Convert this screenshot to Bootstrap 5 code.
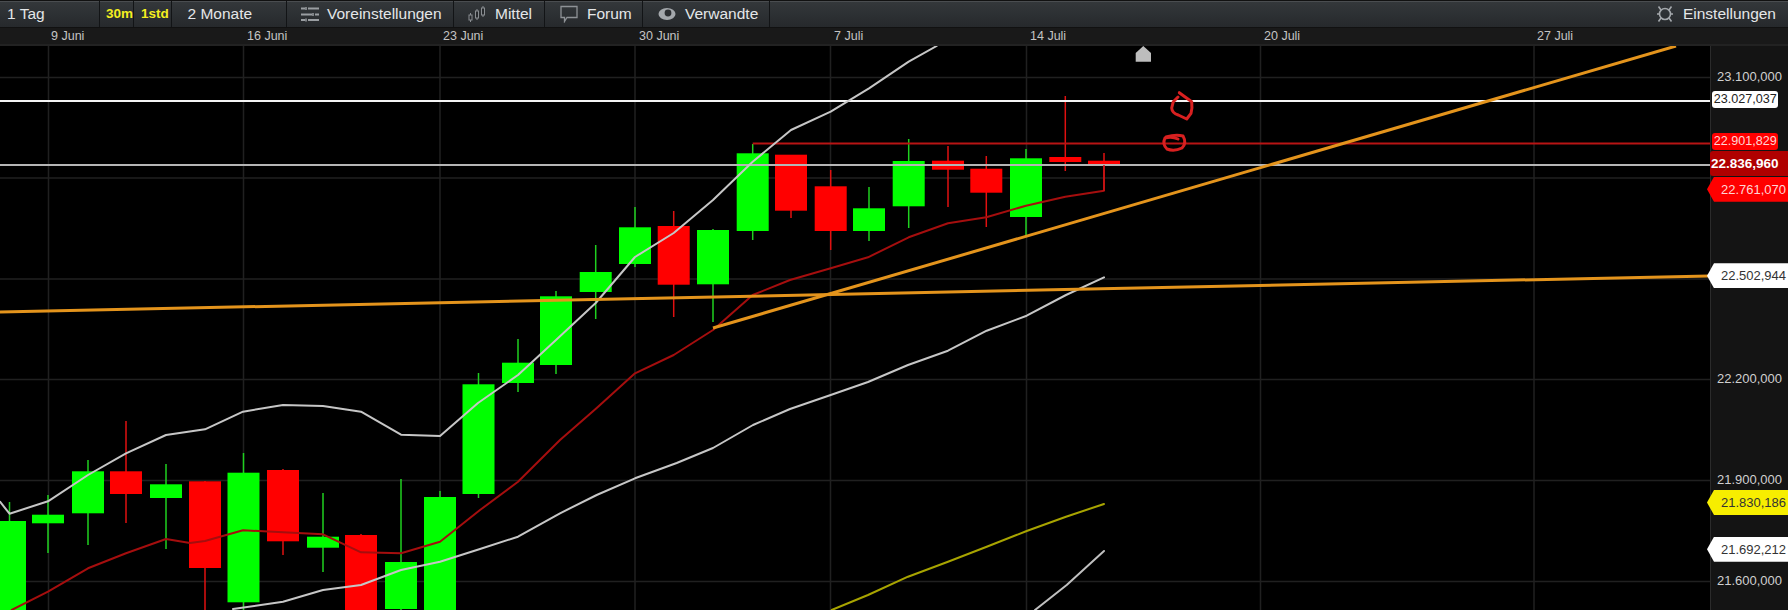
<!DOCTYPE html>
<html lang="de">
<head>
<meta charset="utf-8">
<title>Chart</title>
<link href="https://cdn.jsdelivr.net/npm/bootstrap@5.3.0/dist/css/bootstrap.min.css" rel="stylesheet">
<style>
html,body{height:100%;margin:0;background:#000;overflow:hidden;}
body{font-family:"Liberation Sans",Arial,sans-serif;}
.chart-app{width:1788px;height:610px;}
.tool-bar{height:28px;background:linear-gradient(#34383b,#26292c);border-top:1px solid #111;border-bottom:1px solid #111;box-shadow:inset 0 1px #4a4d50;color:#e4e6e8;font-size:15.5px;line-height:1;}
.tool-item{height:100%;padding-left:7px;border-right:1px solid #121416;white-space:nowrap;}
.w-tag{width:100px;}.w-m{width:34px;padding-left:6px;}.w-h{width:37.5px;padding-left:7px;}.w-mon{width:115.5px;padding-left:16px;}
.w-vor{width:167px;padding-left:14px;}.w-mit{width:91px;padding-left:14px;}.w-for{width:98px;padding-left:15px;}.w-ver{width:127px;padding-left:15px;}
.w-vor .tool-ico{margin-right:8px;}
.tool-gold{color:#f4ee20;font-weight:700;font-size:13.5px;}
.tool-ico{margin-right:9px;flex:none;}
.tool-set{padding-right:12px;}
.date-bar{height:18px;background:#191919;border-bottom:2px solid #222;color:#c4c4c4;font-size:12.5px;}
.date-tag{position:absolute;top:1px;line-height:15px;}
.plot-area{height:564px;}
.plot-svg{display:block;width:1710px;height:564px;flex:none;background:#000;}
.scale-col{width:78px;background:#141414;border-left:1px solid #2b2b2b;font-size:13px;color:#d0d0d0;}
.scale-val{position:absolute;left:6px;line-height:15px;}
.tag-box{position:absolute;left:1.3px;width:66px;text-align:center;border-radius:3px;line-height:16px;height:17px;font-size:12.6px;white-space:nowrap;}
.tag-white{background:#fff;color:#222;}
.tag-red{background:#f00;color:#ffd5d5;}
.tag-cur{position:absolute;left:-1px;width:78px;height:25px;line-height:25px;background:#b00000;color:#fff;font-weight:700;padding-left:1px;font-size:13.5px;border-radius:3px 0 0 3px;white-space:nowrap;}
.tag-arrow{position:absolute;left:-4px;width:81px;height:25px;line-height:25px;font-size:13px;padding-left:14px;clip-path:polygon(0 50%,7px 0,100% 0,100% 100%,7px 100%);white-space:nowrap;}
.arr-red{background:#f00;color:#ffd5d5;}
.arr-white{background:#fff;color:#333;}
.arr-yellow{background:#f7ee00;color:#333;}
.g-line{stroke:#202020;stroke-width:1.5;}
.s-line{fill:none;stroke-linejoin:round;stroke-linecap:round;}
.up rect{fill:#00ff00;}
.up line{stroke:#1fd01f;stroke-width:1.5;}
.dn rect{fill:#ff0000;}
.dn line{stroke:#e01010;stroke-width:1.5;}
</style>
</head>
<body>
<div class="chart-app d-flex flex-column">
  <div class="tool-bar d-flex align-items-center">
    <div class="tool-item w-tag d-flex align-items-center">1 Tag</div>
    <div class="tool-item w-m tool-gold d-flex align-items-center">30m</div>
    <div class="tool-item w-h tool-gold d-flex align-items-center">1std</div>
    <div class="tool-item w-mon d-flex align-items-center">2 Monate</div>
    <div class="tool-item w-vor d-flex align-items-center">
      <svg class="tool-ico" width="18" height="16" viewBox="0 0 18 16" stroke="#9a9ea2" stroke-width="2" fill="none"><path d="M0 2.500H4M7 2.500H18M0 8.500H11M14 8.500H18M0 14H4M7 14H18"/><path d="M5 1V4M12 7V10M5 12.500V15.500" stroke-width="1.500"/></svg>
      Voreinstellungen</div>
    <div class="tool-item w-mit d-flex align-items-center">
      <svg class="tool-ico" width="18" height="18" viewBox="0 0 18 18" stroke="#8a8e92" stroke-width="1" fill="none"><path d="M2.500 8V17M9 4V15M15 1V12"/><rect x="1" y="10" width="3" height="5" fill="#26292c"/><rect x="7.500" y="6" width="3" height="7" fill="#26292c"/><rect x="13.500" y="3" width="3" height="7" fill="#26292c"/></svg>
      Mittel</div>
    <div class="tool-item w-for d-flex align-items-center">
      <svg class="tool-ico" width="18" height="18" viewBox="0 0 18 18" stroke="#8e9296" stroke-width="1.300" fill="none"><path d="M1 1.500H17V12.500H7L4.500 16.500V12.500H1Z"/></svg>
      Forum</div>
    <div class="tool-item w-ver d-flex align-items-center">
      <svg class="tool-ico" width="18" height="14" viewBox="0 0 18 14"><ellipse cx="9" cy="7" rx="8.500" ry="6" fill="#a4a8ac"/><circle cx="10" cy="6" r="3.400" fill="#2c2f32"/></svg>
      Verwandte</div>
    <div class="tool-set ms-auto d-flex align-items-center">
      <svg class="tool-ico" width="18" height="18" viewBox="0 0 18 18" stroke="#a4a8ac" stroke-width="1.600" fill="none"><circle cx="9" cy="9" r="5.500"/><path d="M2.500 1.500L5 5M15.500 1.500L13 5M2.500 16.500L5 13M15.500 16.500L13 13M1 9H3.500M14.500 9H17"/></svg>
      Einstellungen</div>
  </div>
  <div class="date-bar position-relative">
    <span class="date-tag" style="left:51px">9 Juni</span>
    <span class="date-tag" style="left:247px">16 Juni</span>
    <span class="date-tag" style="left:443px">23 Juni</span>
    <span class="date-tag" style="left:639px">30 Juni</span>
    <span class="date-tag" style="left:834px">7 Juli</span>
    <span class="date-tag" style="left:1030px">14 Juli</span>
    <span class="date-tag" style="left:1264px">20 Juli</span>
    <span class="date-tag" style="left:1537px">27 Juli</span>
  </div>
  <div class="plot-area d-flex">
    <svg class="plot-svg" viewBox="0 46 1710 564" xmlns="http://www.w3.org/2000/svg">
      <g class="g-line">
        <line x1="0" x2="1710" y1="77.500" y2="77.500"/><line x1="0" x2="1710" y1="178" y2="178"/><line x1="0" x2="1710" y1="279" y2="279"/><line x1="0" x2="1710" y1="379.500" y2="379.500"/><line x1="0" x2="1710" y1="480.500" y2="480.500"/><line x1="0" x2="1710" y1="581.500" y2="581.500"/>
        <line y1="46" y2="610" x1="48.500" x2="48.500"/><line y1="46" y2="610" x1="243.500" x2="243.500"/><line y1="46" y2="610" x1="440" x2="440"/><line y1="46" y2="610" x1="635" x2="635"/><line y1="46" y2="610" x1="830.500" x2="830.500"/><line y1="46" y2="610" x1="1026.500" x2="1026.500"/><line y1="46" y2="610" x1="1260.500" x2="1260.500"/><line y1="46" y2="610" x1="1534" x2="1534"/>
      </g>
      <g class="up"><line x1="9.500" x2="9.500" y1="502" y2="610"/><rect x="-6" y="521" width="32" height="89"/></g>
      <g class="up"><line x1="48" x2="48" y1="495" y2="553"/><rect x="32" y="514.700" width="32" height="8.600"/></g>
      <g class="up"><line x1="88" x2="88" y1="460" y2="545"/><rect x="72" y="471.300" width="32" height="42"/></g>
      <g class="dn"><line x1="126" x2="126" y1="421" y2="523"/><rect x="110" y="471.300" width="32" height="22.700"/></g>
      <g class="up"><line x1="166" x2="166" y1="464" y2="549"/><rect x="150" y="484.300" width="32" height="13.700"/></g>
      <g class="dn"><line x1="205" x2="205" y1="481" y2="610"/><rect x="189" y="481.300" width="32" height="86.700"/></g>
      <g class="up"><line x1="243.500" x2="243.500" y1="453" y2="610"/><rect x="227.500" y="472.700" width="32" height="129.600"/></g>
      <g class="dn"><line x1="283" x2="283" y1="469" y2="555"/><rect x="267" y="470" width="32" height="71.300"/></g>
      <g class="up"><line x1="323" x2="323" y1="493" y2="572"/><rect x="307" y="536.700" width="32" height="11"/></g>
      <g class="dn"><line x1="361" x2="361" y1="534" y2="610"/><rect x="345" y="535" width="32" height="75"/></g>
      <g class="up"><line x1="401" x2="401" y1="479" y2="610"/><rect x="385" y="562" width="32" height="47"/></g>
      <g class="up"><line x1="440" x2="440" y1="491" y2="610"/><rect x="424" y="497" width="32" height="113"/></g>
      <g class="up"><line x1="478.500" x2="478.500" y1="373" y2="498"/><rect x="462.500" y="384.300" width="32" height="109.700"/></g>
      <g class="up"><line x1="518" x2="518" y1="339" y2="392"/><rect x="502" y="362.700" width="32" height="20.300"/></g>
      <g class="up"><line x1="556" x2="556" y1="291" y2="374"/><rect x="540" y="296.300" width="32" height="68.700"/></g>
      <g class="up"><line x1="595.700" x2="595.700" y1="245" y2="319"/><rect x="579.700" y="272" width="32" height="20"/></g>
      <g class="up"><line x1="635" x2="635" y1="207" y2="267"/><rect x="619" y="227.300" width="32" height="36.700"/></g>
      <g class="dn"><line x1="673.700" x2="673.700" y1="211" y2="317"/><rect x="657.700" y="226" width="32" height="58.700"/></g>
      <g class="up"><line x1="713" x2="713" y1="229" y2="322"/><rect x="697" y="230" width="32" height="54.300"/></g>
      <g class="up"><line x1="752.700" x2="752.700" y1="144" y2="240"/><rect x="736.700" y="153.300" width="32" height="77.700"/></g>
      <g class="dn"><line x1="791" x2="791" y1="155" y2="218"/><rect x="775" y="154.700" width="32" height="56"/></g>
      <g class="dn"><line x1="830.700" x2="830.700" y1="170" y2="250"/><rect x="814.700" y="186.300" width="32" height="44.700"/></g>
      <g class="up"><line x1="869" x2="869" y1="187" y2="241"/><rect x="853" y="208.300" width="32" height="22.700"/></g>
      <g class="up"><line x1="908.700" x2="908.700" y1="139" y2="228"/><rect x="892.700" y="161" width="32" height="45.300"/></g>
      <g class="dn"><line x1="948" x2="948" y1="146" y2="207"/><rect x="932" y="160.700" width="32" height="9"/></g>
      <g class="dn"><line x1="986.300" x2="986.300" y1="156" y2="227"/><rect x="970.300" y="168.700" width="32" height="24"/></g>
      <g class="up"><line x1="1026" x2="1026" y1="149" y2="237"/><rect x="1010" y="158.300" width="32" height="58.700"/></g>
      <g class="dn"><line x1="1065.300" x2="1065.300" y1="96" y2="171"/><rect x="1049.300" y="157" width="32" height="5"/></g>
      <g class="dn"><line x1="1104" x2="1104" y1="153" y2="191"/><rect x="1088" y="160.700" width="32" height="3.600"/></g>

      <line x1="0" x2="1710" y1="101" y2="101" stroke="#f4f4f4" stroke-width="2"/>
      <line x1="752.700" x2="1710" y1="143.500" y2="143.500" stroke="#b81414" stroke-width="1.800"/>
      <line x1="0" x2="1710" y1="165" y2="165" stroke="#b5b5b5" stroke-width="2"/>

      <polyline class="s-line" stroke="#c6c6c6" stroke-width="2" points="0,501.700 9.500,513.700 48,501.300 88,475 126,453.300 166,435 205,429.300 243,411.700 283,405 323,406 361,411.700 401,434.700 440,436 478,403 518,375 556,340 595.700,303 635,257 673.700,233 713,200 752.700,161.700 791,130 830.700,111.700 869,88.300 908.700,61.700 936.700,46"/>
      <polyline class="s-line" stroke="#c6c6c6" stroke-width="2" points="233,609 283,601.700 323,590 361,585 401,570 440,561.700 480,549 518,536.700 560,513.300 596.700,495 635,478.300 676.700,463 713,448 753,425 790,409 830.700,395 868,382 908,365 948,350.700 986.700,330.700 1026.700,315.700 1066,295 1104,277.300"/>
      <polyline class="s-line" stroke="#a50e0e" stroke-width="2" points="11.700,610 48,591.700 88,568.300 126,553.300 166,539 190,543 205,541 243,530.300 283,532.300 323,534.300 361,552.300 401,553.300 440,541.700 480,510 518,481.700 560,440 596.700,408 635,373.300 673.700,355 713,330 752.700,295 790,280 830.700,268.300 868,257.300 908.700,237.300 948,223.300 986.300,217.300 1026,205.700 1065.300,196.700 1104,190.700"/>
      <line x1="1104" x2="1104" y1="191" y2="165" stroke="#c81414" stroke-width="1.500"/>
      <polyline class="s-line" stroke="#a8a400" stroke-width="2" points="831.700,610 868,595 908,576.700 948,561.700 986.700,546.700 1026.700,531 1066,516.700 1104,504"/>
      <polyline class="s-line" stroke="#c0c0c0" stroke-width="2" points="1035,610 1066.700,585 1104,551"/>

      <line x1="0" y1="312" x2="1709" y2="276" stroke="#e4941c" stroke-width="3"/>
      <line x1="713" y1="328" x2="1676" y2="46" stroke="#e4941c" stroke-width="3"/>

      <path d="M1135.700 61.700V53L1143.300 46L1151 53V61.700Z" fill="#bdbdbd"/>
      <path class="s-line" stroke="#d82020" stroke-width="3" d="M1179.300 92.700L1191.700 101.700Q1192.500 108 1191 113.300L1186.700 119L1178.300 115Q1172 113 1171.700 108L1173.300 101.700L1178 97"/>
      <path class="s-line" stroke="#d82020" stroke-width="3" d="M1166 137Q1176 134 1183 136Q1187 143 1182 148Q1174 152 1167 149Q1162 144 1165 138Q1172 136 1178 139"/>
    </svg>
    <div class="scale-col position-relative flex-grow-1">
      <span class="scale-val" style="top:22.500px">23.100,000</span>
      <span class="tag-box tag-white" style="top:44.700px">23.027,037</span>
      <span class="tag-box tag-red" style="top:86.700px">22.901,829</span>
      <span class="tag-cur" style="top:104.700px">22.836,960</span>
      <span class="tag-arrow arr-red" style="top:130.700px">22.761,070</span>
      <span class="tag-arrow arr-white" style="top:217.300px">22.502,944</span>
      <span class="scale-val" style="top:325.200px">22.200,000</span>
      <span class="scale-val" style="top:425.800px">21.900,000</span>
      <span class="tag-arrow arr-yellow" style="top:444px">21.830,186</span>
      <span class="tag-arrow arr-white" style="top:490.700px">21.692,212</span>
      <span class="scale-val" style="top:526.500px">21.600,000</span>
    </div>
  </div>
</div>
</body>
</html>
